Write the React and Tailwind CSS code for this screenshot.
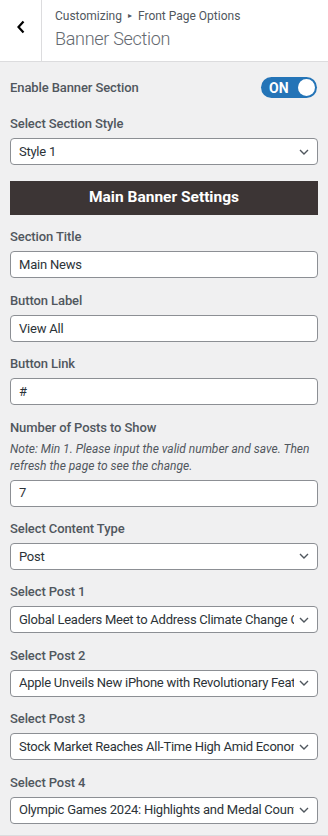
import React from "react";

const FONT = { fontFamily: 'Roboto, "Open Sans", sans-serif' };

function Chevron({ className = "" }) {
  return (
    <svg width="10" height="6" viewBox="0 0 10 6" className={className}>
      <path d="M1 1l4 4 4-4" fill="none" stroke="#50575e" strokeWidth="1.4" />
    </svg>
  );
}

function Label({ children }) {
  return (
    <div className="text-[13px] leading-[20px] font-medium tracking-[-0.1px] text-[#50575e]">
      {children}
    </div>
  );
}

function TextBox({ value }) {
  return (
    <div className="mt-[4px] h-[27px] w-full bg-white border border-[#8c8f94] rounded-[4px] px-[8px] flex items-center text-[13px] tracking-[-0.2px] text-[#2c3338]">
      {value}
    </div>
  );
}

function SelectBox({ value }) {
  return (
    <div className="mt-[4px] h-[27px] w-full bg-white border border-[#8c8f94] rounded-[4px] pl-[8px] pr-[8px] flex items-center gap-[5px] text-[13px] tracking-[-0.25px] text-[#2c3338]">
      <span className="flex-1 overflow-hidden whitespace-nowrap">{value}</span>
      <Chevron />
    </div>
  );
}

function Field({ label, children, note }) {
  return (
    <div className="mt-[12.4px]">
      <Label>{label}</Label>
      {note && (
        <p className="mt-[3px] text-[12px] leading-[17.5px] italic text-[#50575e]">
          {note}
        </p>
      )}
      {children}
    </div>
  );
}

export default function App() {
  const posts = [
    "Global Leaders Meet to Address Climate Change Challenges",
    "Apple Unveils New iPhone with Revolutionary Features",
    "Stock Market Reaches All-Time High Amid Economic Recovery",
    "Olympic Games 2024: Highlights and Medal Count",
  ];
  return (
    <div style={FONT} className="w-[328px] h-[836px] bg-[#f0f0f1] flex flex-col border-b border-[#dcdcde]">
      {/* Header */}
      <div className="h-[62px] bg-white border-b border-[#dcdcde] flex shrink-0">
        <div className="w-[42px] border-r border-[#dcdcde] flex justify-center pt-[20px]">
          <svg width="10" height="14" viewBox="0 0 10 14">
            <path d="M7.5 1.5L2.5 7l5 5.5" fill="none" stroke="#000" strokeWidth="2.2" />
          </svg>
        </div>
        <div className="pl-[13px] pt-[6px]">
          <div className="text-[12px] leading-[20px] text-[#50575e] flex items-center">
            Customizing
            <span className="mx-[6px] text-[8px]">▸</span>
            Front Page Options
          </div>
          <div className="text-[18px] leading-[26px] font-light tracking-[-0.3px] text-[#646970]">
            Banner Section
          </div>
        </div>
      </div>

      {/* Content */}
      <div className="px-[10px]">
        <div className="mt-[15px] h-[21px] flex items-center justify-between">
          <Label>Enable Banner Section</Label>
          <div className="mr-[1px] w-[56px] h-[21px] rounded-full bg-[#2474b7] flex items-center justify-between pl-[8px] pr-[2px]">
            <span className="text-white text-[14px] font-bold leading-none">ON</span>
            <span className="w-[17px] h-[17px] rounded-full bg-white" />
          </div>
        </div>

        <div className="mt-[16px]">
          <Label>Select Section Style</Label>
          <SelectBox value="Style 1" />
        </div>

        <div className="mt-[16px] h-[34px] bg-[#3c3535] flex items-center justify-center text-white text-[15.5px] font-bold">
          Main Banner Settings
        </div>

        <div className="mt-[1px]">
          <Field label="Section Title">
            <TextBox value="Main News" />
          </Field>
          <Field label="Button Label">
            <TextBox value="View All" />
          </Field>
          <Field label="Button Link">
            <TextBox value="#" />
          </Field>
          <Field
            label="Number of Posts to Show"
            note="Note: Min 1. Please input the valid number and save. Then refresh the page to see the change."
          >
            <TextBox value="7" />
          </Field>
          <Field label="Select Content Type">
            <SelectBox value="Post" />
          </Field>
          {posts.map((p, i) => (
            <Field key={i} label={`Select Post ${i + 1}`}>
              <SelectBox value={p} />
            </Field>
          ))}
        </div>
      </div>
    </div>
  );
}
